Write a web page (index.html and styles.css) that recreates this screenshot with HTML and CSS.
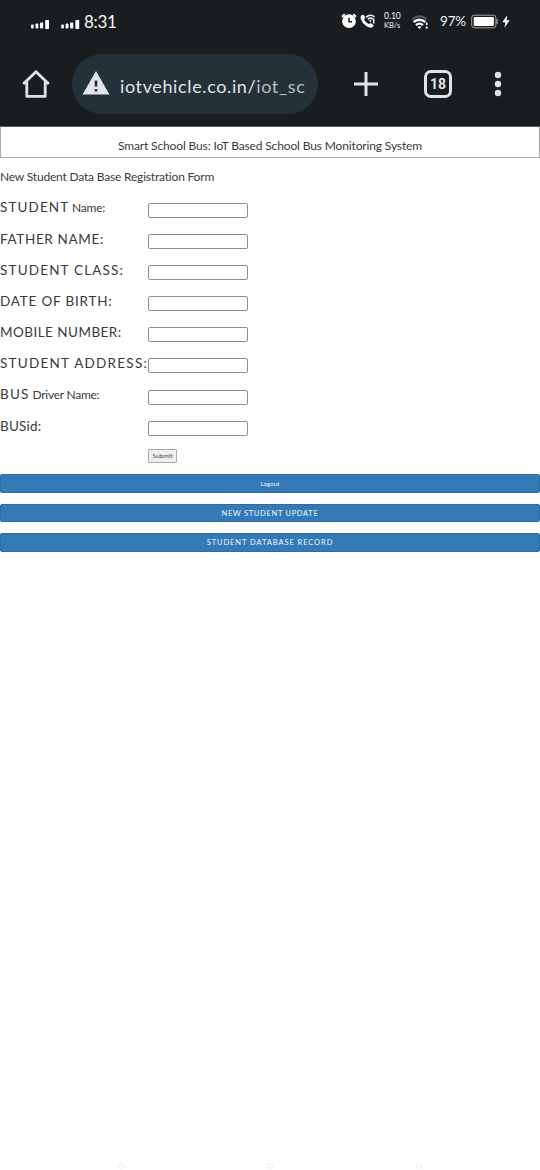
FILE: index.html
```
<!DOCTYPE html>
<html lang="en">
<head>
<meta charset="utf-8">
<title>Smart School Bus</title>
<link rel="stylesheet" href="styles.css">
</head>
<body>
<header class="chrome">
  <div class="status">
    <svg class="signals" width="50" height="12" viewBox="0 0 50 12" fill="#fff">
      <rect x="0" y="6.5" width="2.7" height="4" rx="1"/><rect x="4.5" y="5.5" width="2.9" height="5" rx="1"/><rect x="9" y="4.5" width="3.2" height="6" rx="1"/><rect x="14.2" y="2" width="3.8" height="9" rx=".7"/>
      <rect x="30.2" y="6.5" width="2.7" height="4" rx="1"/><rect x="34.6" y="5.5" width="2.9" height="5" rx="1"/><rect x="39.1" y="4.5" width="3.2" height="6" rx="1"/><rect x="44.4" y="2" width="3.8" height="9" rx=".7"/>
    </svg>
    <span class="clock">8:31</span>
    <svg class="alarm" width="16" height="16" viewBox="0 0 16 16">
      <circle cx="8" cy="8.2" r="6.9" fill="#fff"/>
      <path d="M.9 3.8 3.8 1.2M15.1 3.8 12.2 1.2" stroke="#fff" stroke-width="2"/>
      <path d="M8 4.7v4.1h3" fill="none" stroke="#1a1d1f" stroke-width="1.5"/>
    </svg>
    <svg class="call" width="16" height="15" viewBox="0 0 16 15" fill="none" stroke="#fff">
      <path d="M1.2 1.4Q2.8 0 3.9 1.2L5.1 3.3Q5.3 4.3 4.1 5.4 5.4 8.4 8.7 10 10 8.8 11 9.3l2.2 1.4Q14.3 11.8 12.5 13.2 10.3 14.5 6.2 11.9 2.1 9.2.8 5.1.1 2.7 1.2 1.4z" fill="#fff" stroke="none"/>
      <path d="M6 3.3Q10.2-.5 14.5 2.8M7.8 5.2q2.8-2.3 5 0M13.7 4.6v5" stroke-width="1.5"/>
      <circle cx="10.3" cy="6.8" r="1" fill="#fff" stroke="none"/>
    </svg>
    <span class="speed"><span class="rate">0.10</span><span class="unit">KB/s</span></span>
    <svg class="wifi" width="19" height="15" viewBox="0 0 19 15" fill="none" stroke="#fff" stroke-width="2">
      <path d="M1.2 4.2Q8.5-1.8 15.8 4.2" stroke="#555b5e"/>
      <path d="M2.6 7Q8.5 2.4 14.4 7M5 10.1Q8.5 7.2 12 10.1" stroke-width="2.3"/>
      <path d="m6.4 11.8 2.1 2.2 2.1-2.2Q8.5 10.5 6.4 11.8z" fill="#fff" stroke="none"/>
      <path d="M15.7 7.5v2.4M15.7 11.5v2.3" stroke-width="1.7"/>
    </svg>
    <span class="percent">97%</span>
    <svg class="battery" width="27" height="15" viewBox="0 0 27 15">
      <rect x=".7" y="1.2" width="24.2" height="12.6" rx="2.5" fill="none" stroke="#a3a6a8"/>
      <rect x="2.7" y="3" width="20.2" height="9" rx="1" fill="#fff"/>
      <path d="M26 5v5" stroke="#a3a6a8" stroke-width="1.2"/>
    </svg>
    <svg class="bolt" width="8" height="13" viewBox="0 0 8 13"><path d="M5.2.3.3 7.3h3L2.5 12.8 7.7 5.3H4.6z" fill="#fff"/></svg>
  </div>
  <div class="toolbar">
    <svg class="home" width="28" height="28" viewBox="0 0 28 28" fill="none" stroke="#e1e3e6" stroke-width="2.8" stroke-linejoin="round">
      <path d="M1.2 14 14 1.8 26.8 14M4.8 11v15.4h18.4V11"/>
    </svg>
    <div class="address">
      <svg class="warning" width="28" height="24" viewBox="0 0 28 24"><path d="M14 0 27.5 23.5H.5z" fill="#e1e3e6"/><path d="M14 9.5v6M14 18v2.6" stroke="#243139" stroke-width="2.6"/></svg>
      <span class="url">iotvehicle.co.in/<span class="path">iot_sc</span></span>
    </div>
    <svg class="plus" width="24" height="24" viewBox="0 0 24 24"><path d="M12 0v24M0 12h24" stroke="#e1e3e6" stroke-width="3"/></svg>
    <span class="tabs">18</span>
    <svg class="more" width="8" height="26" viewBox="0 0 8 26" fill="#e1e3e6"><circle cx="4" cy="4" r="3.2"/><circle cx="4" cy="13" r="3.2"/><circle cx="4" cy="22" r="3.2"/></svg>
  </div>
</header>
<main>
  <div class="banner"><span class="title">Smart School Bus: IoT Based School Bus Monitoring System</span></div>
  <h1 class="heading">New Student Data Base Registration Form</h1>
  <form class="form">
    <div class="row"><label class="label mixed" for="name"><span class="caps">STUDENT</span> Name:</label><input class="field" id="name"></div>
    <div class="row"><label class="label father" for="father">FATHER NAME:</label><input class="field" id="father"></div>
    <div class="row"><label class="label class-name" for="class">STUDENT CLASS:</label><input class="field" id="class"></div>
    <div class="row"><label class="label birth" for="birth">DATE OF BIRTH:</label><input class="field" id="birth"></div>
    <div class="row"><label class="label mobile" for="mobile">MOBILE NUMBER:</label><input class="field" id="mobile"></div>
    <div class="row"><label class="label street" for="address">STUDENT ADDRESS:</label><input class="field" id="address"></div>
    <div class="row"><label class="label driver" for="driver"><span class="caps">BUS</span> Driver Name:</label><input class="field" id="driver"></div>
    <div class="row"><label class="label bus" for="bus">BUSid:</label><input class="field" id="bus"></div>
    <button class="submit" type="button">Submit</button>
  </form>
  <nav class="links">
    <a class="link logout">Logout</a>
    <a class="link update">NEW STUDENT UPDATE</a>
    <a class="link record">STUDENT DATABASE RECORD</a>
  </nav>
</main>
<footer class="navigation"><i class="dot"></i><i class="dot"></i><i class="dot"></i></footer>
</body>
</html>
```
FILE: styles.css
```
* { box-sizing: border-box; }
body {
  margin: 0;
  height: 1170px;
  display: flex;
  flex-direction: column;
  overflow: hidden;
  background: #fefefe;
  color: #3a3a3a;
  font-family: Lato, "Open Sans", sans-serif;
  white-space: nowrap;
}
svg { display: block; flex: none; }
.chrome { height: 127px; flex: none; background: #1a1d1f; border-bottom: 1px solid #5a5c5e; }
.status { height: 42px; padding-left: 31px; display: flex; align-items: center; color: #f4f4f4; }
.signals { margin-top: 6px; }
.clock { width: 34px; margin-left: 3px; font-size: 17px; letter-spacing: -.3px; }
.alarm { margin-left: 223px; }
.call { margin-left: 3px; }
.speed { width: 21px; margin-left: 8px; display: flex; flex-direction: column; font-size: 8.5px; line-height: 10px; }
.unit { font-size: 7.5px; }
.wifi { margin-left: 6px; margin-top: 2px; }
.percent { width: 27px; margin-left: 10px; font-size: 13.5px; letter-spacing: -.2px; }
.battery { margin-left: 4px; }
.bolt { margin-left: 4px; }
.toolbar { height: 84px; padding-left: 22px; display: flex; align-items: center; }
.address { width: 246px; height: 60px; margin-left: 22px; padding-left: 10px; border-radius: 30px; background: #243139; display: flex; align-items: center; }
.warning { margin-bottom: 2px; }
.url { margin: 4px 0 0 10px; font-size: 18px; letter-spacing: .62px; color: #e1e3e6; }
.path { color: #b8bec2; }
.plus { margin-left: 36px; }
.tabs { width: 28px; height: 28px; margin-left: 46px; border: 3px solid #e1e3e6; border-radius: 7px; color: #e1e3e6; font: bold 14px/22px Roboto, sans-serif; text-align: center; }
.more { margin-left: 42px; }
.banner { height: 31px; border: 1px solid #aaa; border-top: 0; padding-top: 6px; display: flex; align-items: center; justify-content: center; }
.title { font-size: 12px; letter-spacing: -.14px; }
.heading { margin: 0; padding-top: 11px; height: 37px; font-size: 12px; line-height: 16px; font-weight: 400; letter-spacing: -.19px; }
.form { margin: 0; height: 279px; }
.row { height: 31.1px; display: grid; grid-template-columns: 148px 100px; align-items: start; }
.label { font-size: 13.5px; line-height: 18px; margin-top: 4px; }
.mixed, .driver { font-size: 12px; letter-spacing: -.25px; }
.mixed, .driver { line-height: 16px; }
.mixed .caps { letter-spacing: 1.1px; }
.driver .caps { letter-spacing: 1.2px; }
.caps { font-size: 13.5px; }
.father { letter-spacing: .65px; }
.class-name { letter-spacing: 1.17px; }
.birth { letter-spacing: .8px; }
.mobile { letter-spacing: .46px; }
.street { letter-spacing: 1.25px; }
.bus { letter-spacing: .2px; }
.field { width: 100px; height: 15px; margin: 8px 0 0; padding: 0; border: 1px solid #8d8d8d; border-radius: 2px; background: #fff; }
.submit { display: block; width: 29px; height: 14px; margin: 5px 0 0 148px; padding: 0; border: 1px solid #aaa; border-radius: 1px; background: #efefef; color: #444; font: 6.5px/12px Lato, sans-serif; }
.links { display: flex; flex-direction: column; gap: 11px; }
.link { height: 18.7px; border: 1px solid #2e6da4; border-radius: 2px; background: #337ab7; color: #f2f7fb; font-size: 7.5px; line-height: 17px; text-align: center; }
.logout { font-size: 6px; letter-spacing: .15px; line-height: 18px; }
.update { letter-spacing: .7px; }
.record { letter-spacing: .92px; line-height: 18px; }
.navigation { margin-top: auto; height: 7px; padding-left: 118px; display: flex; gap: 143px; }
.dot { width: 6px; height: 6px; border: 1px solid #ececec; border-radius: 50%; }
```
